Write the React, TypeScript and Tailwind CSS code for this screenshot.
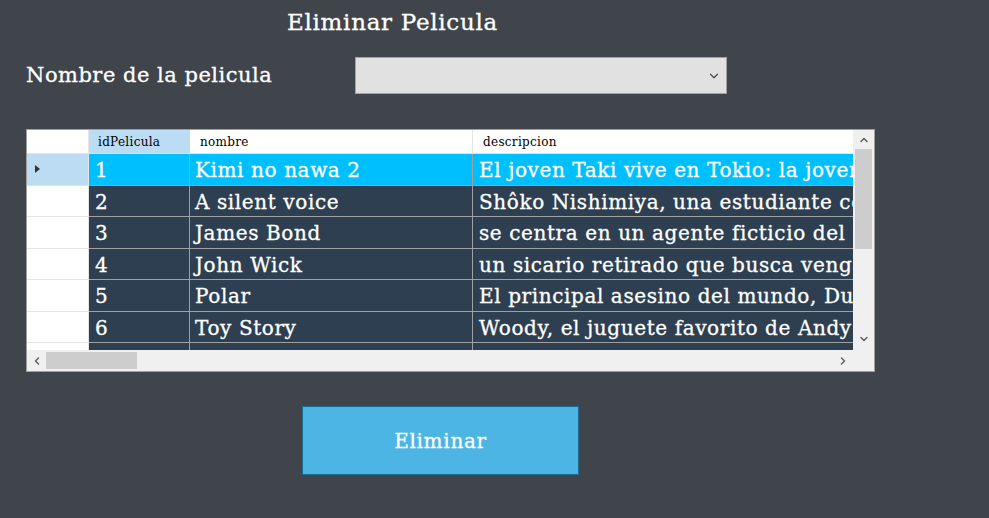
import { ChevronDown, ChevronUp, ChevronLeft, ChevronRight } from 'lucide-react';

const peliculas = [
    { id: 1, nombre: 'Kimi no nawa 2', descripcion: 'El joven Taki vive en Tokio: la joven Mitsuha' },
    { id: 2, nombre: 'A silent voice', descripcion: 'Shôko Nishimiya, una estudiante con sordera' },
    { id: 3, nombre: 'James Bond', descripcion: 'se centra en un agente ficticio del servicio' },
    { id: 4, nombre: 'John Wick', descripcion: 'un sicario retirado que busca venganza' },
    { id: 5, nombre: 'Polar', descripcion: 'El principal asesino del mundo, Duncan' },
    { id: 6, nombre: 'Toy Story', descripcion: 'Woody, el juguete favorito de Andy' },
    { id: 7, nombre: 'Avengers', descripcion: 'Los heroes mas poderosos de la tierra' },
];

const App = () => {
    return (
        <div className="w-[989px] h-[518px] bg-[#40444b] text-white overflow-hidden [-webkit-text-stroke:0.3px_currentColor]" style={{ fontFamily: '"DejaVu Serif", "Liberation Serif", serif' }}>
            <div className="pt-[7px] pl-[287px] text-[23px] leading-[30px] tracking-[0.7px]">Eliminar Pelicula</div>

            <div className="flex items-center mt-[20px]">
                <div className="ml-[26px] w-[329px] text-[21px] tracking-[0.5px]">Nombre de la pelicula</div>
                <div className="w-[372px] h-[37px] bg-[#e1e1e1] border border-[#a3a3a3] flex items-center justify-end pr-[5px]">
                    <ChevronDown size={14} strokeWidth={2} className="text-[#444]" />
                </div>
            </div>

            {/* data grid */}
            <div className="ml-[26px] mt-[35px] w-[849px] h-[243px] border border-[#a0a0a0] bg-[#f0f0f0] flex flex-col">
                <div className="flex h-[220px]">
                    <div className="w-[826px] h-[220px] overflow-hidden bg-white">
                        <div className="flex h-[24px] text-[12px] tracking-[0.3px] text-black [-webkit-text-stroke:0px]">
                            <div className="w-[62px] shrink-0 bg-white border-r border-b border-[#e4e4e4]" />
                            <div className="w-[101px] shrink-0 bg-[#bcdcf4] border-b border-[#e4e4e4] pl-[9px] flex items-center">idPelicula</div>
                            <div className="w-[283px] shrink-0 bg-white border-r border-b border-[#e4e4e4] pl-[10px] flex items-center">nombre</div>
                            <div className="w-[380px] shrink-0 bg-white border-b border-[#e4e4e4] pl-[10px] flex items-center">descripcion</div>
                        </div>
                        {peliculas.map((p, i) => {
                            const sel = i === 0;
                            return (
                                <div key={p.id} className="flex h-[31.5px] text-[20px] tracking-[0.6px]">
                                    <div className={`w-[62px] shrink-0 border-r border-b border-[#e4e4e4] flex items-center pl-[8px] ${sel ? 'bg-[#bcdcf4]' : 'bg-white'}`}>
                                        {sel && <div className="w-0 h-0 border-y-[4px] border-y-transparent border-l-[5px] border-l-[#333]" />}
                                    </div>
                                    <div className={`w-[101px] shrink-0 border-r border-b border-[#a0a0a0] pl-[6px] pt-[2px] flex items-center ${sel ? 'bg-[#00bfff]' : 'bg-[#2e3f51]'}`}>{p.id}</div>
                                    <div className={`w-[283px] shrink-0 border-r border-b border-[#a0a0a0] pl-[5px] pt-[2px] flex items-center ${sel ? 'bg-[#00bfff]' : 'bg-[#2e3f51]'}`}>{p.nombre}</div>
                                    <div className={`w-[380px] shrink-0 border-b border-[#a0a0a0] pl-[6px] pt-[2px] flex items-center whitespace-nowrap overflow-hidden ${sel ? 'bg-[#00bfff]' : 'bg-[#2e3f51]'}`}>{p.descripcion}</div>
                                </div>
                            );
                        })}
                    </div>
                    <div className="w-[21px] flex flex-col items-center bg-[#f0f0f0]">
                        <div className="h-[19px] flex items-center justify-center"><ChevronUp size={12} strokeWidth={3} className="text-[#606060]" /></div>
                        <div className="w-[17px] h-[100px] bg-[#cdcdcd]" />
                        <div className="flex-1" />
                        <div className="h-[23px] flex items-center justify-center"><ChevronDown size={12} strokeWidth={3} className="text-[#606060]" /></div>
                    </div>
                </div>
                <div className="flex h-[21px] items-center">
                    <div className="w-[19px] flex justify-center"><ChevronLeft size={12} strokeWidth={3} className="text-[#606060]" /></div>
                    <div className="w-[91px] h-[17px] bg-[#cdcdcd]" />
                    <div className="flex-1" />
                    <div className="w-[19px] flex justify-center mr-[22px]"><ChevronRight size={12} strokeWidth={3} className="text-[#606060]" /></div>
                </div>
            </div>

            <div className="ml-[302px] mt-[34px] w-[277px] h-[69px] bg-[#4cb5e3] border border-[#1d6b8d] flex items-center justify-center text-[20px] tracking-[0.7px]">
                Eliminar
            </div>
        </div>
    );
};

export default App;
